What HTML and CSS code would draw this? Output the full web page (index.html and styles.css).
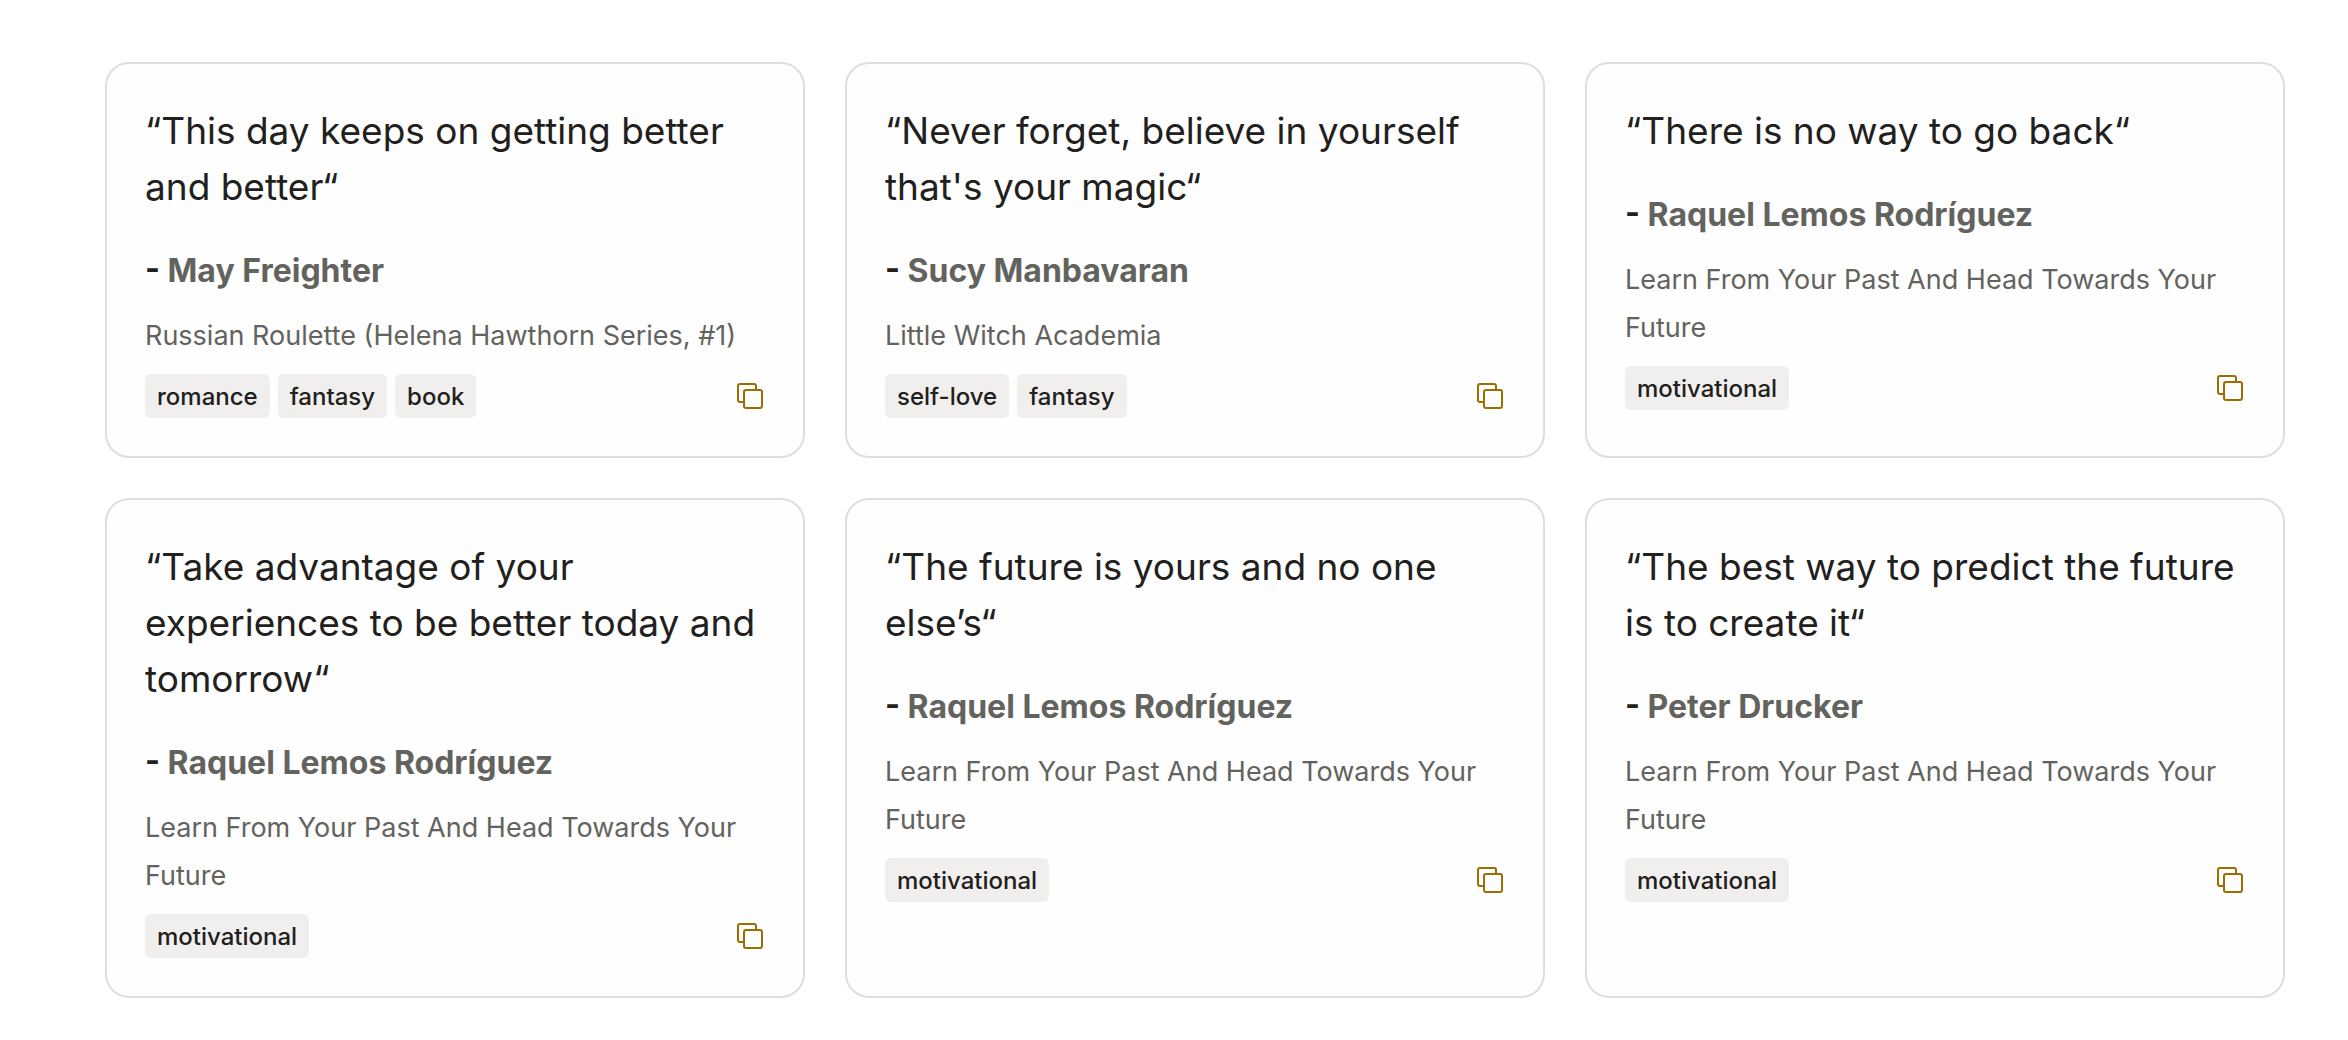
FILE: index.html
```html
<!DOCTYPE html>
<html lang="en">
<head>
<meta charset="utf-8">
<meta name="viewport" content="width=device-width, initial-scale=1">
<title>Quotes</title>
<link rel="stylesheet" href="styles.css">
</head>
<body>
<svg width="0" height="0" class="sprite" aria-hidden="true">
  <symbol id="copy" viewBox="0 0 30 30">
    <path d="M9 21H5a2 2 0 0 1-2-2V5a2 2 0 0 1 2-2h14a2 2 0 0 1 2 2v4"/>
    <rect x="9" y="9" width="18" height="18" rx="2"/>
  </symbol>
</svg>
<main class="quotes">
  <article class="card">
    <blockquote class="quote">“This day keeps on getting better and better“</blockquote>
    <p class="author">- <span class="name">May Freighter</span></p>
    <p class="source">Russian Roulette (Helena Hawthorn Series, #1)</p>
    <footer class="footer">
      <ul class="tags"><li class="tag">romance</li><li class="tag">fantasy</li><li class="tag">book</li></ul>
      <button class="copy" type="button" aria-label="Copy quote"><svg class="icon"><use href="#copy"/></svg></button>
    </footer>
  </article>
  <article class="card">
    <blockquote class="quote">“Never forget, believe in yourself that's your magic“</blockquote>
    <p class="author">- <span class="name">Sucy Manbavaran</span></p>
    <p class="source">Little Witch Academia</p>
    <footer class="footer">
      <ul class="tags"><li class="tag">self-love</li><li class="tag">fantasy</li></ul>
      <button class="copy" type="button" aria-label="Copy quote"><svg class="icon"><use href="#copy"/></svg></button>
    </footer>
  </article>
  <article class="card">
    <blockquote class="quote">“There is no way to go back“</blockquote>
    <p class="author">- <span class="name">Raquel Lemos Rodríguez</span></p>
    <p class="source">Learn From Your Past And Head Towards Your Future</p>
    <footer class="footer">
      <ul class="tags"><li class="tag">motivational</li></ul>
      <button class="copy" type="button" aria-label="Copy quote"><svg class="icon"><use href="#copy"/></svg></button>
    </footer>
  </article>
  <article class="card">
    <blockquote class="quote">“Take advantage of your experiences to be better today and tomorrow“</blockquote>
    <p class="author">- <span class="name">Raquel Lemos Rodríguez</span></p>
    <p class="source">Learn From Your Past And Head Towards Your Future</p>
    <footer class="footer">
      <ul class="tags"><li class="tag">motivational</li></ul>
      <button class="copy" type="button" aria-label="Copy quote"><svg class="icon"><use href="#copy"/></svg></button>
    </footer>
  </article>
  <article class="card">
    <blockquote class="quote">“The future is yours and no one else’s“</blockquote>
    <p class="author">- <span class="name">Raquel Lemos Rodríguez</span></p>
    <p class="source">Learn From Your Past And Head Towards Your Future</p>
    <footer class="footer">
      <ul class="tags"><li class="tag">motivational</li></ul>
      <button class="copy" type="button" aria-label="Copy quote"><svg class="icon"><use href="#copy"/></svg></button>
    </footer>
  </article>
  <article class="card">
    <blockquote class="quote">“The best way to predict the future is to create it“</blockquote>
    <p class="author">- <span class="name">Peter Drucker</span></p>
    <p class="source">Learn From Your Past And Head Towards Your Future</p>
    <footer class="footer">
      <ul class="tags"><li class="tag">motivational</li></ul>
      <button class="copy" type="button" aria-label="Copy quote"><svg class="icon"><use href="#copy"/></svg></button>
    </footer>
  </article>
</main>
</body>
</html>
```
FILE: styles.css
```css
* {
  box-sizing: border-box;
}

body {
  margin: 0;
  background: #fff;
  color: #21201c;
  font-family: Inter, "Liberation Sans", sans-serif;
}

.sprite {
  position: absolute;
}

.quotes {
  display: grid;
  grid-template-columns: repeat(3, 1fr);
  gap: 40px;
  padding: 62px 63px 42px 105px;
}

.card {
  padding: 39px 38px 38px;
  border: 2px solid #dedede;
  border-radius: 24px;
  background: #fefefe;
}

.quote {
  margin: 0 0 32px;
  font-size: 37px;
  line-height: 56px;
}

.author {
  margin: 0 0 17px;
  font-size: 32px;
  font-weight: 700;
  line-height: 48px;
}

.name {
  color: #63635e;
}

.source {
  margin: 0 0 14px;
  color: #63635e;
  font-size: 27px;
  line-height: 48px;
}

.footer {
  display: flex;
  align-items: center;
  justify-content: space-between;
}

.tags {
  display: flex;
  gap: 8px;
  margin: 0;
  padding: 0;
  list-style: none;
}

.tag {
  padding: 7px 12px 5px;
  border-radius: 6px;
  background: #f0efed;
  font-size: 24px;
  font-weight: 500;
  line-height: 32px;
}

.copy {
  display: flex;
  padding: 0;
  border: 0;
  background: none;
  color: #9e6c00;
  cursor: pointer;
}

.icon {
  width: 30px;
  height: 30px;
  fill: none;
  stroke: currentColor;
  stroke-width: 2;
}
```
